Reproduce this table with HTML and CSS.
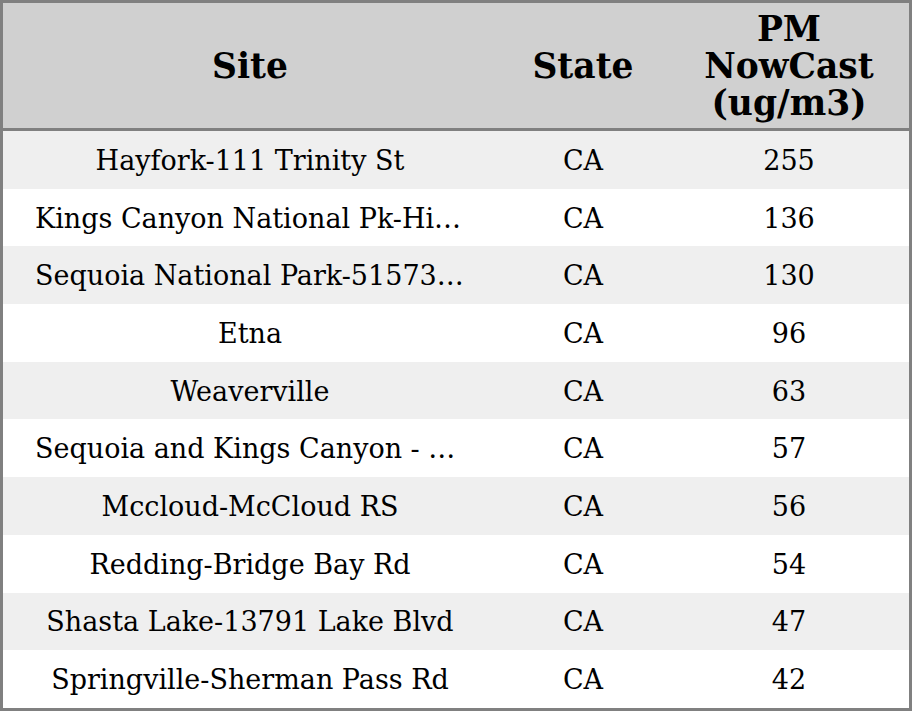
FILE: index.html
```html
<!DOCTYPE html>
<html>
<head>
<meta charset="utf-8">
<link rel="stylesheet" href="styles.css">
</head>
<body>
<table class="aq">
  <colgroup>
    <col class="c-site">
    <col class="c-state">
    <col class="c-pm">
  </colgroup>
  <thead>
    <tr>
      <th>Site</th>
      <th>State</th>
      <th>PM<br>NowCast<br>(ug/m3)</th>
    </tr>
  </thead>
  <tbody>
    <tr><td class="site">Hayfork-111 Trinity St</td><td>CA</td><td>255</td></tr>
    <tr><td class="site">Kings Canyon National Pk-Highway 180</td><td>CA</td><td>136</td></tr>
    <tr><td class="site">Sequoia National Park-51573 Generals Hwy</td><td>CA</td><td>130</td></tr>
    <tr><td class="site">Etna</td><td>CA</td><td>96</td></tr>
    <tr><td class="site">Weaverville</td><td>CA</td><td>63</td></tr>
    <tr><td class="site">Sequoia and Kings Canyon - Ash Mountain</td><td>CA</td><td>57</td></tr>
    <tr><td class="site">Mccloud-McCloud RS</td><td>CA</td><td>56</td></tr>
    <tr><td class="site">Redding-Bridge Bay Rd</td><td>CA</td><td>54</td></tr>
    <tr><td class="site">Shasta Lake-13791 Lake Blvd</td><td>CA</td><td>47</td></tr>
    <tr><td class="site">Springville-Sherman Pass Rd</td><td>CA</td><td>42</td></tr>
  </tbody>
</table>
</body>
</html>
```
FILE: styles.css
```css
html, body {
  margin: 0;
  padding: 0;
  background: #ffffff;
}
.aq {
  width: 912px;
  table-layout: fixed;
  border-collapse: separate;
  border-spacing: 0;
  border: 3px solid #808080;
  font-family: "DejaVu Serif", serif;
  color: #000;
}
.c-site { width: 494px; }
.c-state { width: 172px; }
.c-pm { width: 240px; }
.aq th {
  background: #d0d0d0;
  font-weight: bold;
  font-size: 34.5px;
  line-height: 37px;
  height: 128px;
  padding: 2px 0 0;
  text-align: center;
  vertical-align: middle;
  border-bottom: 3px solid #808080;
  box-sizing: border-box;
}
.aq td {
  font-size: 27px;
  line-height: 30px;
  height: 57.7px;
  padding: 2px 32px 0;
  text-align: center;
  vertical-align: middle;
  white-space: nowrap;
  overflow: hidden;
  text-overflow: ellipsis;
  box-sizing: border-box;
}
.aq tbody tr:nth-child(odd) td { background: #efefef; }
.aq tbody tr:nth-child(even) td { background: #ffffff; }
```
